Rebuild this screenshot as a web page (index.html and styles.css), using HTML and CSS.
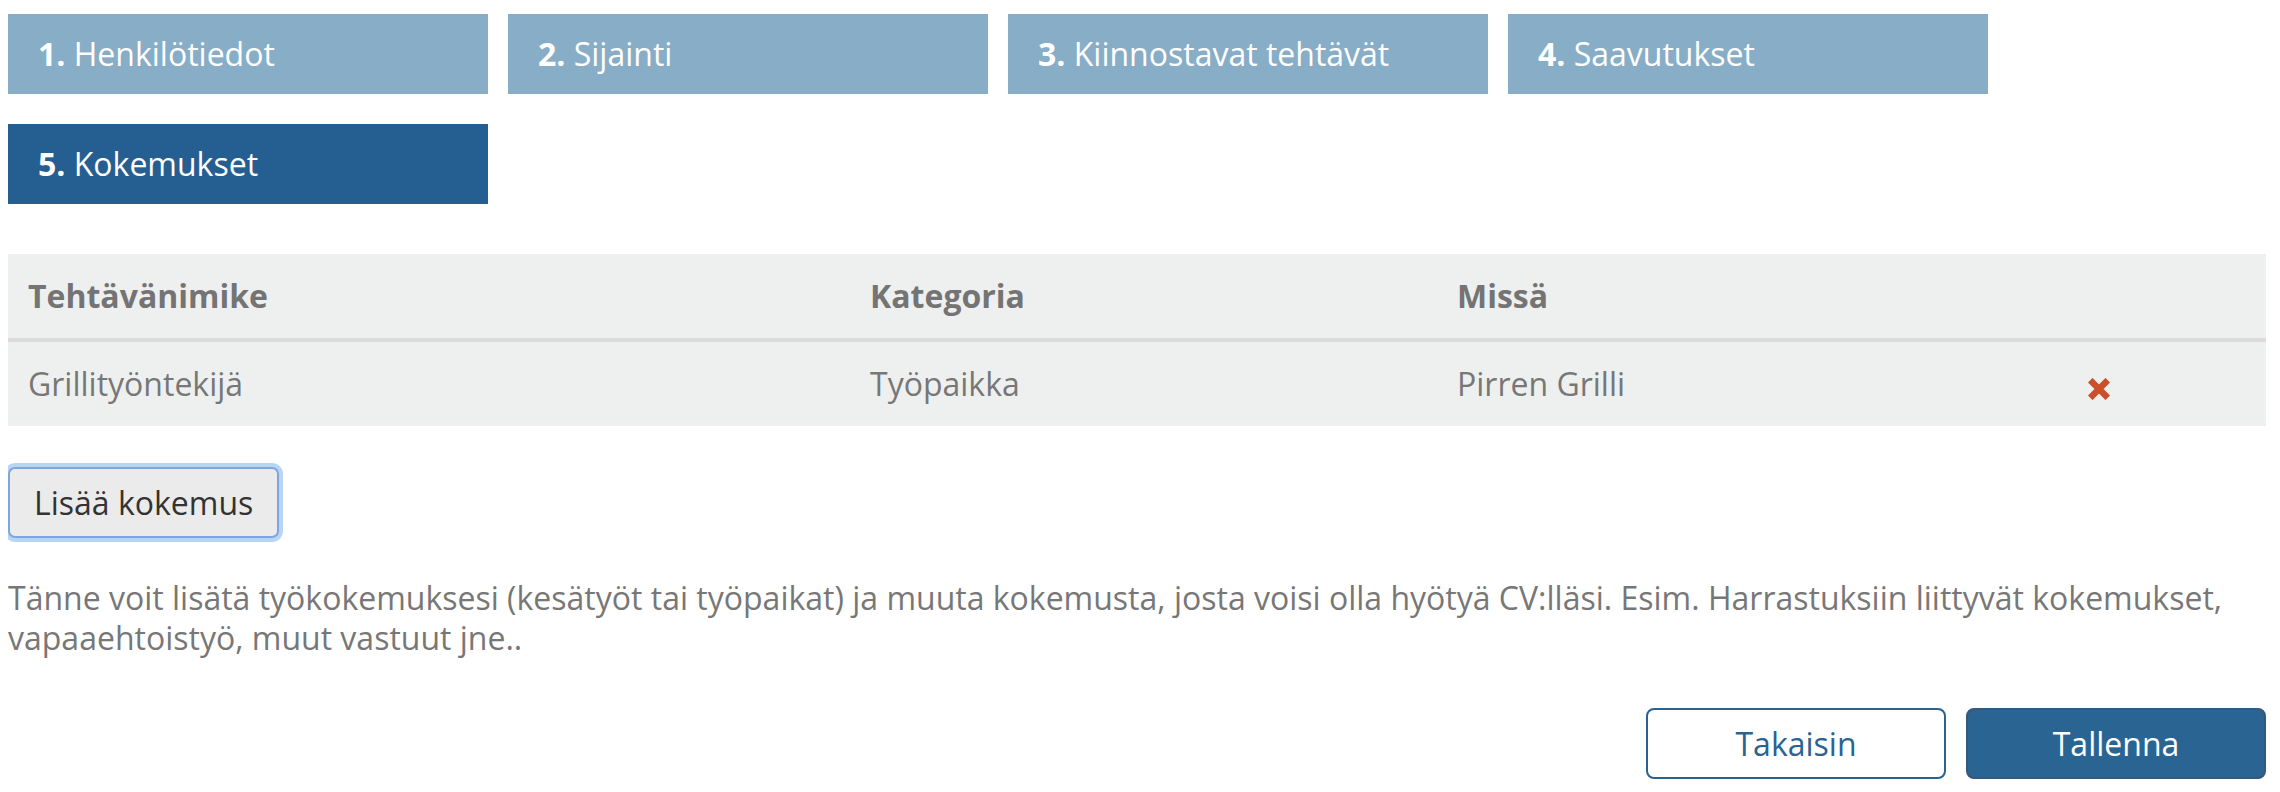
FILE: index.html
```html
<!DOCTYPE html>
<html lang="fi">
<head>
    <meta charset="UTF-8">
    <meta name="viewport" content="width=device-width, initial-scale=1.0">
    <title>Kokemukset</title>
    <link rel="stylesheet" href="styles.css">
</head>
<body>
    <div class="page">
        <!-- Vaiheet -->
        <nav class="steps">
            <a class="step" href="#"><b>1.</b> Henkilötiedot</a>
            <a class="step" href="#"><b>2.</b> Sijainti</a>
            <a class="step" href="#"><b>3.</b> Kiinnostavat tehtävät</a>
            <a class="step" href="#"><b>4.</b> Saavutukset</a>
            <a class="step active" href="#"><b>5.</b> Kokemukset</a>
        </nav>

        <!-- Kokemukset-taulukko -->
        <table class="experience-table">
            <thead>
                <tr>
                    <th class="col-title">Tehtävänimike</th>
                    <th class="col-category">Kategoria</th>
                    <th class="col-where">Missä</th>
                    <th class="col-actions"></th>
                </tr>
            </thead>
            <tbody>
                <tr>
                    <td>Grillityöntekijä</td>
                    <td>Työpaikka</td>
                    <td>Pirren Grilli</td>
                    <td>
                        <svg class="remove-icon" width="22" height="22" viewBox="0 0 22 22" aria-label="Poista">
                            <path d="M4.5 4.5 L17.5 17.5 M17.5 4.5 L4.5 17.5" stroke="#c9502a" stroke-width="6.5" stroke-linecap="square"/>
                        </svg>
                    </td>
                </tr>
            </tbody>
        </table>

        <button class="add-button">Lisää kokemus</button>

        <p class="help-text">Tänne voit lisätä työkokemuksesi (kesätyöt tai työpaikat) ja muuta kokemusta, josta voisi olla hyötyä CV:lläsi. Esim. Harrastuksiin liittyvät kokemukset, vapaaehtoistyö, muut vastuut jne..</p>

        <!-- Lomakkeen toiminnot -->
        <div class="form-actions">
            <button class="btn btn-outline">Takaisin</button>
            <button class="btn btn-primary">Tallenna</button>
        </div>
    </div>
</body>
</html>
```

FILE: styles.css
```css
/* Perustyylit */
body {
    margin: 8px;
    font-family: "Open Sans", "Liberation Sans", sans-serif;
    font-size: 32px;
    color: #777;
    background-color: #fff;
}

.page {
    width: 2258px;
    padding-top: 6px;
}

/* Vaiheet */
.steps {
    display: flex;
    flex-wrap: wrap;
    gap: 30px 20px;
}

.step {
    box-sizing: border-box;
    width: 480px;
    height: 80px;
    padding-left: 30px;
    line-height: 80px;
    color: #fff;
    text-decoration: none;
    background-color: #88adc7;
}

.step b {
    font-weight: 700;
}

.step.active {
    background-color: #255e91;
}

/* Taulukko */
.experience-table {
    width: 2258px;
    margin-top: 50px;
    border-collapse: collapse;
    background-color: #eef0ef;
    table-layout: fixed;
}

.experience-table th,
.experience-table td {
    box-sizing: border-box;
    padding: 20px;
    line-height: 44px;
    text-align: left;
}

.experience-table th {
    font-weight: 700;
    color: #747474;
    border-bottom: 4px solid #dcdcdc;
}

.col-title { width: 842px; }
.col-category { width: 587px; }
.col-where { width: 631px; }
.col-actions { width: 198px; }

.remove-icon {
    vertical-align: -4px;
}

/* Lisää-painike */
.add-button {
    display: block;
    margin: 41px 0 0 0;
    padding: 11px 24px;
    font-family: inherit;
    font-size: 32px;
    line-height: 45px;
    color: #333;
    background-color: #ebebeb;
    border: 2px solid #7ea6dc;
    border-radius: 7px;
    box-shadow: 0 0 0 4px #b9d5f6;
}

.help-text {
    margin: 40px 0 0 0;
    line-height: 40px;
}

/* Lomakkeen toiminnot */
.form-actions {
    display: flex;
    justify-content: flex-end;
    gap: 20px;
    margin-top: 50px;
}

.btn {
    box-sizing: border-box;
    width: 300px;
    height: 71px;
    font-family: inherit;
    font-size: 32px;
    border-radius: 8px;
    border: 2px solid #2a6292;
}

.btn-outline {
    color: #2a6292;
    background-color: #fff;
}

.btn-primary {
    color: #fff;
    background-color: #2a6492;
    border-color: #34597a;
}
```
